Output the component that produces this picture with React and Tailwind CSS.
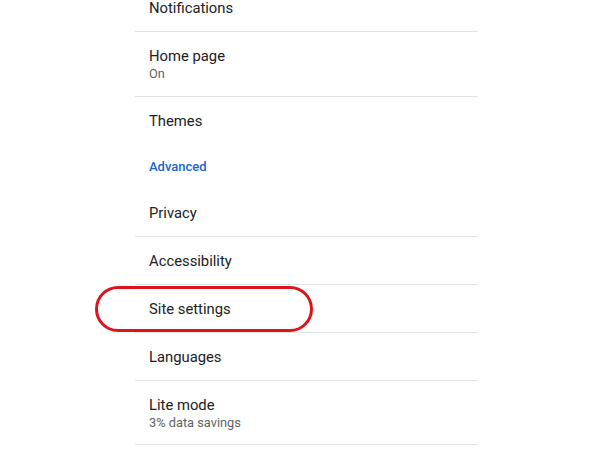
export default function App() {
  const font = { fontFamily: "Roboto, 'Noto Sans', sans-serif" };
  return (
    <div className="relative w-[600px] h-[450px] overflow-hidden bg-white" style={font}>
      <div className="ml-[135px] w-[343px] -mt-[16px] flex flex-col">
        <div className="h-[48px] flex items-center pl-[14px] pt-[2px] border-b border-[#e2e2e2]">
          <span className="text-[14.8px] text-[#202124]">Notifications</span>
        </div>
        <div className="h-[65px] flex flex-col justify-center pl-[14px] pt-[1px] border-b border-[#e2e2e2]">
          <span className="text-[14.8px] leading-[18px] text-[#202124]">Home page</span>
          <span className="text-[12.8px] leading-[17px] text-[#5f6368]">On</span>
        </div>
        <div className="h-[47px] flex items-center pl-[14px] pt-[2px]">
          <span className="text-[14.8px] text-[#202124]">Themes</span>
        </div>
        <div className="h-[44px] flex items-center pl-[14px] pt-[2px]">
          <span className="text-[13px] font-medium text-[#1a66c9]">Advanced</span>
        </div>
        <div className="h-[49px] flex items-center pl-[14px] pt-[2px] border-b border-[#e2e2e2]">
          <span className="text-[14.8px] text-[#202124]">Privacy</span>
        </div>
        <div className="h-[48px] flex items-center pl-[14px] pt-[2px] border-b border-[#e2e2e2]">
          <span className="text-[14.8px] text-[#202124]">Accessibility</span>
        </div>
        <div className="h-[48px] flex items-center pl-[14px] pt-[2px] border-b border-[#e2e2e2]">
          <span className="text-[14.8px] text-[#202124]">Site settings</span>
        </div>
        <div className="h-[48px] flex items-center pl-[14px] pt-[2px] border-b border-[#e2e2e2]">
          <span className="text-[14.8px] text-[#202124]">Languages</span>
        </div>
        <div className="h-[64px] flex flex-col justify-center pl-[14px] pt-[1px] border-b border-[#e2e2e2]">
          <span className="text-[14.8px] leading-[18px] text-[#202124]">Lite mode</span>
          <span className="text-[12.8px] leading-[17px] text-[#5f6368]">3% data savings</span>
        </div>
      </div>
      <div className="absolute left-[95px] top-[286px] w-[218px] h-[46px] rounded-full border-[3px] border-[#dc141c]"></div>
    </div>
  );
}
